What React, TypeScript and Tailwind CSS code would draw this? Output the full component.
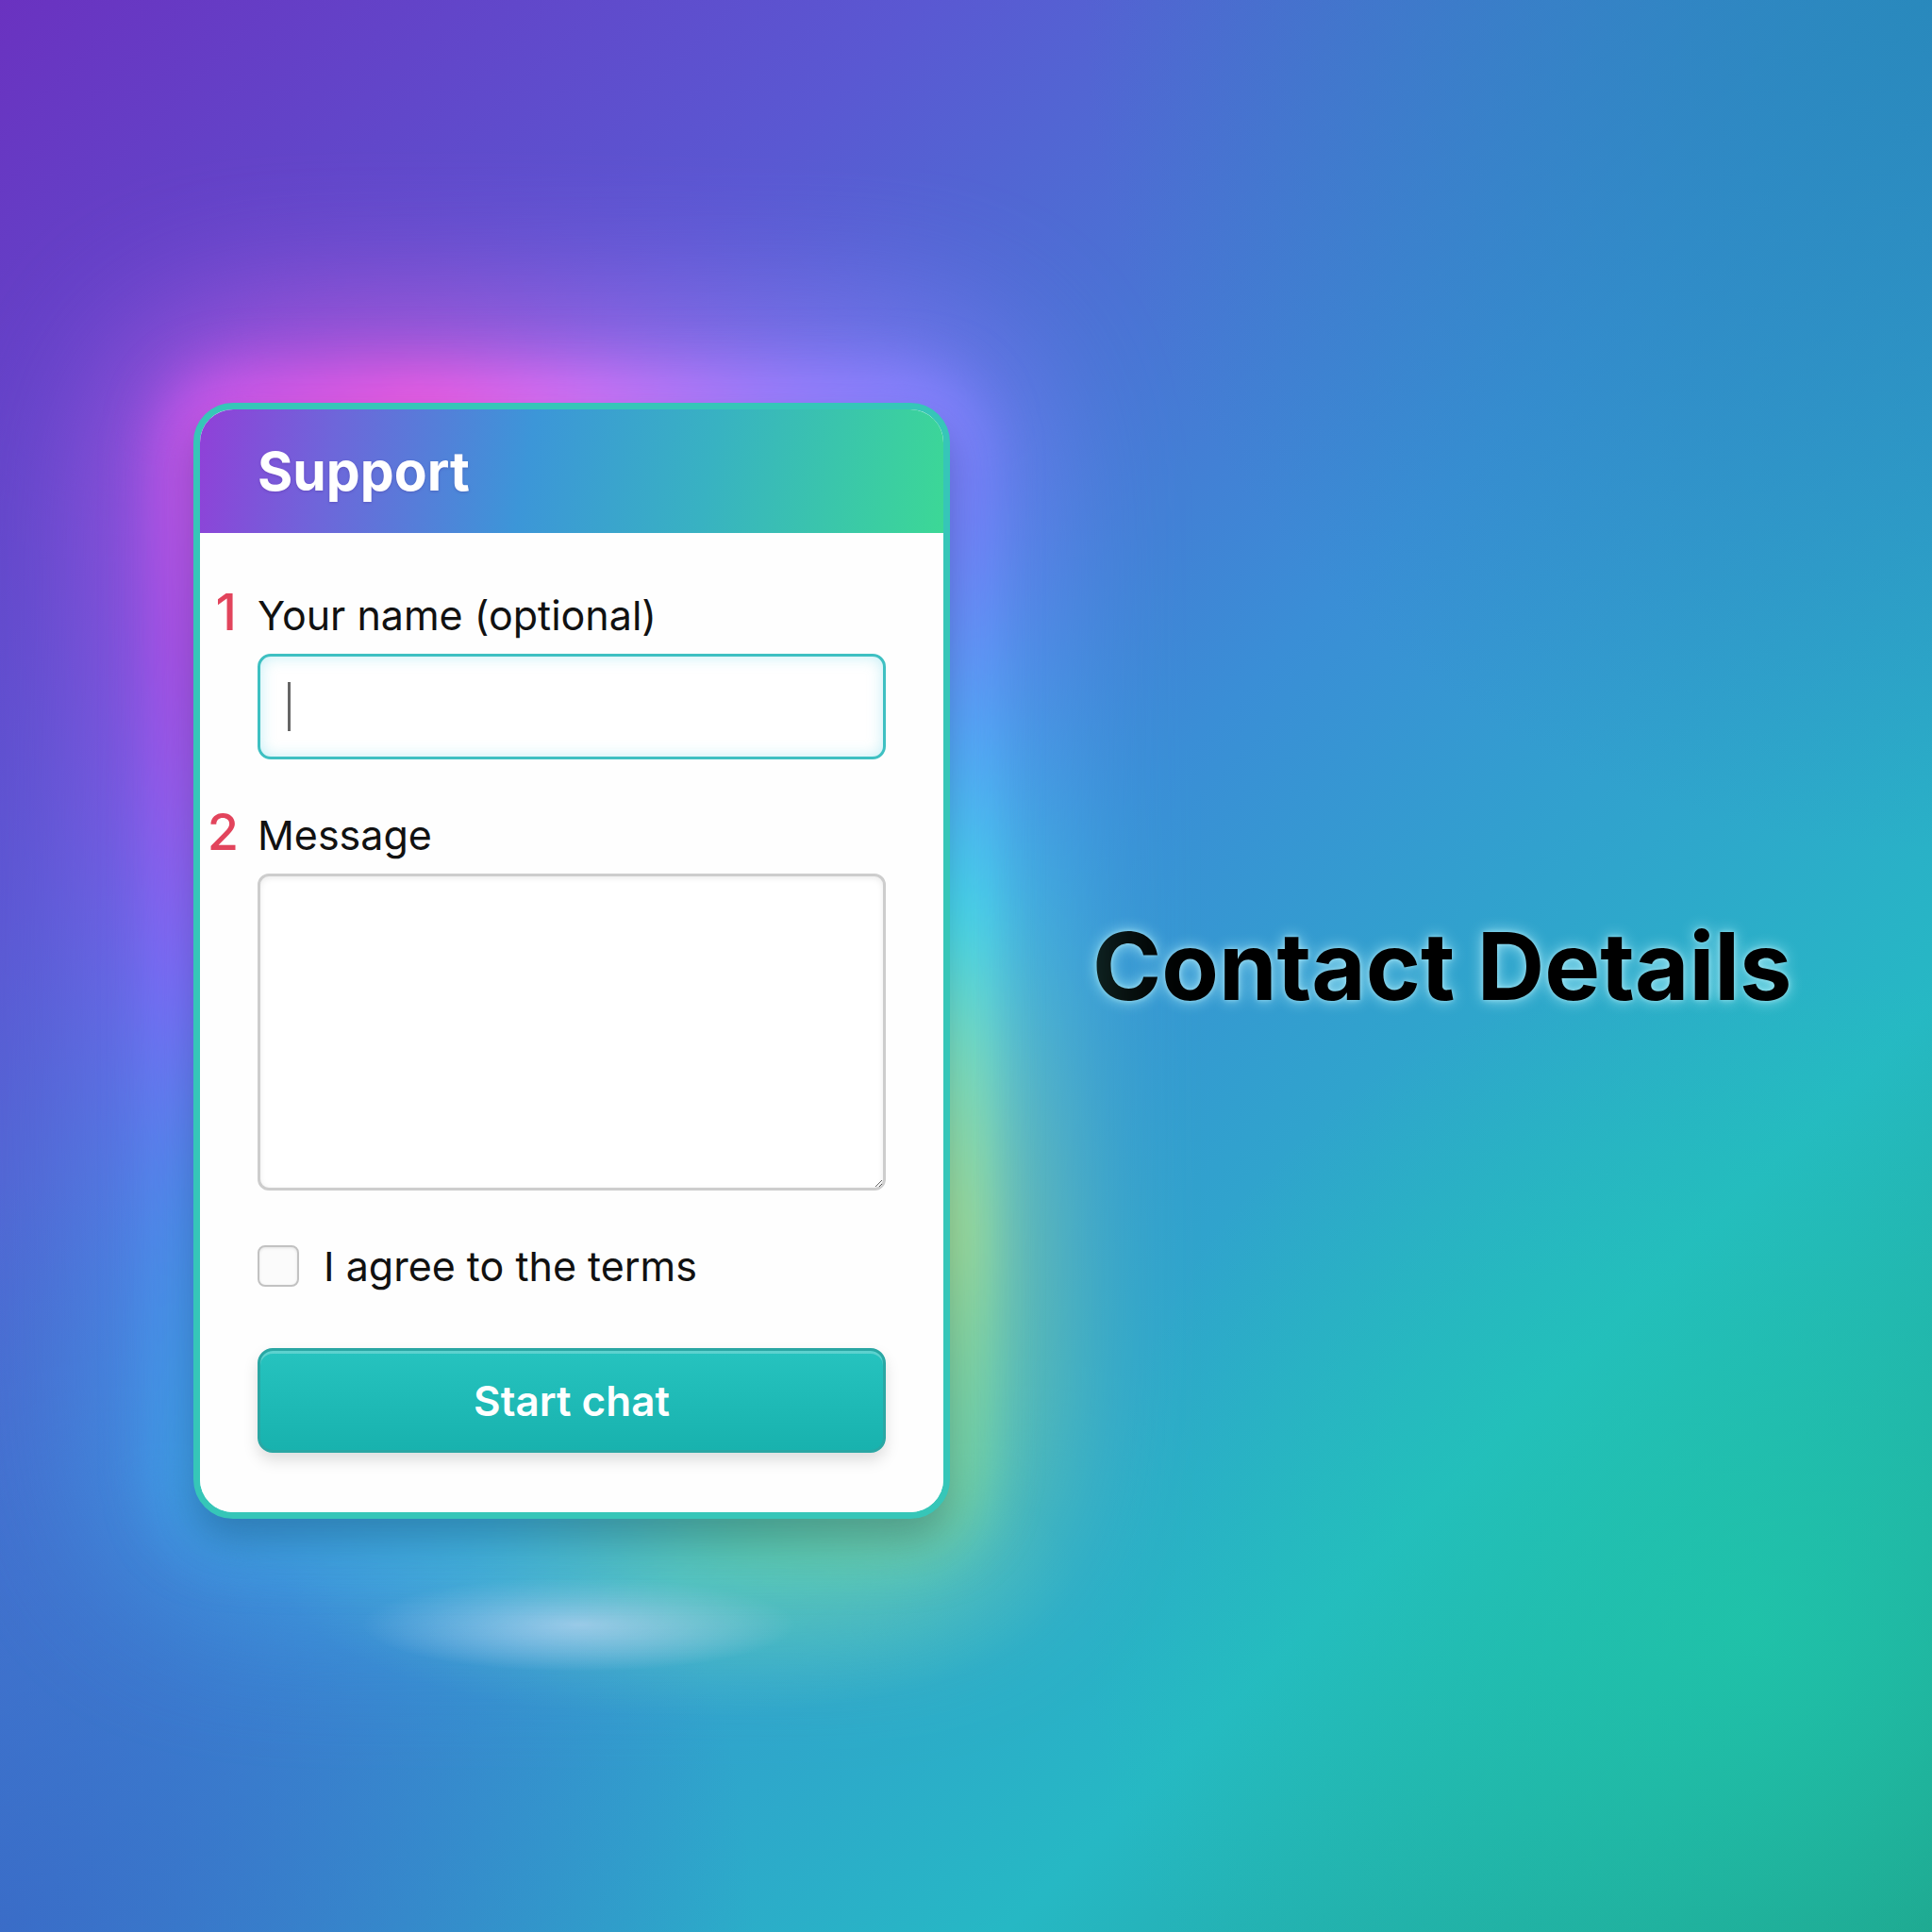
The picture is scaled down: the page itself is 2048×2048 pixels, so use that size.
export default function App() {
  return (
    <div className="relative w-[2048px] h-[2048px] overflow-hidden font-[Inter,'Noto_Sans',sans-serif] bg-[image:radial-gradient(ellipse_230px_50px_at_614px_1722px,rgba(214,216,252,0.8),rgba(214,216,252,0)),radial-gradient(ellipse_420px_150px_at_720px_1670px,rgba(110,215,200,0.5),rgba(110,215,200,0)),radial-gradient(circle_900px_at_2048px_0px,rgba(38,136,184,0.85),rgba(38,136,184,0)),radial-gradient(circle_800px_at_0px_2048px,rgba(58,100,196,0.8),rgba(58,100,196,0)),radial-gradient(circle_700px_at_1850px_1720px,rgba(30,204,170,0.7),rgba(30,204,170,0)),linear-gradient(135deg,#6a32c0_0%,#5a58d2_24%,#3a8ed6_50%,#26b8c4_76%,#1f9a86_100%)]">
      <div className="flex items-start pt-[427px] pl-[205px]">
        <div className="relative w-[802px] shrink-0">
          <div className="absolute -inset-[90px] rounded-[150px] blur-[80px] opacity-75 bg-[conic-gradient(from_0deg,#d070f4_0deg,#9a80ff_22deg,#7a84ff_41deg,#58b0ff_60deg,#48e4f0_83deg,#80e8c0_103deg,#a8e090_126deg,#80d8a0_140deg,#60d0a8_163deg,#40b8e0_188deg,#40a0e8_217deg,#5090f0_237deg,#8070ff_266deg,#b050e8_309deg,#c858e8_326deg,#ec5ce0_345deg,#d070f4_360deg)]" />
          <div className="absolute -inset-[30px] rounded-[72px] blur-[30px] bg-[conic-gradient(from_0deg,#d872f6_0deg,#9a80ff_22deg,#7a84ff_41deg,#58b0ff_60deg,#48e6f2_83deg,#84ecc2_103deg,#b0e894_126deg,#84dca2_140deg,#60d0a8_163deg,#40b8e0_188deg,#40a0e8_217deg,#5090f0_237deg,#8070ff_266deg,#b452ea_309deg,#cc58ea_326deg,#f05ce2_345deg,#d872f6_360deg)]" />
          <div className="relative overflow-hidden rounded-[42px] border-[7px] border-[#36c6b8] bg-white shadow-[0_22px_40px_rgba(10,40,80,0.32)]">
            <div className="flex h-[131px] items-center px-[61px] bg-[linear-gradient(100deg,#9040d8_0%,#6e66da_18%,#3c96d8_44%,#38b2c2_68%,#3cd896_100%)]">
              <span className="text-[57px] font-bold leading-none text-white [text-shadow:0_1px_3px_rgba(60,20,120,0.25)]">Support</span>
            </div>
            <div className="flex flex-col px-[61px] pt-[57px] pb-[63px] bg-[#fefefe]">
              <div className="flex items-baseline -ml-[61px]">
                <span className="w-[61px] pr-[22px] text-right text-[54px] font-medium leading-none text-[#e2445c]">1</span>
                <span className="text-[43px] leading-none text-[#111]">Your name (optional)</span>
              </div>
              <div className="mt-[17px] flex h-[112px] items-center rounded-[14px] border-[3px] border-[#3ec0c2] bg-white pl-[29px] shadow-[inset_0_0_16px_rgba(80,205,225,0.35)]">
                <div className="h-[52px] w-[3px] bg-[#666]" />
              </div>
              <div className="mt-[50px] flex items-baseline -ml-[61px]">
                <span className="w-[61px] pr-[20px] text-right text-[54px] font-medium leading-none text-[#e2445c]">2</span>
                <span className="text-[43px] leading-none text-[#111]">Message</span>
              </div>
              <textarea
                readOnly
                className="mt-[17px] block h-[336px] w-full rounded-[12px] border-[3px] border-[#cdcdcd] bg-white shadow-[inset_0_2px_6px_rgba(0,0,0,0.08)] outline-none"
              />
              <div className="mt-[58px] flex h-[44px] items-center gap-[26px]">
                <div className="h-[44px] w-[44px] rounded-[8px] border-[2.5px] border-[#c2c2c2] bg-[#fbfbfb] shadow-[inset_0_1px_3px_rgba(0,0,0,0.1)]" />
                <span className="text-[43px] leading-none text-[#111]">I agree to the terms</span>
              </div>
              <button className="mt-[65px] flex h-[111px] w-full items-center justify-center rounded-[16px] border-[3px] border-[#2aa7a4] bg-[linear-gradient(180deg,#26c3bf,#18b2ae)] text-[44px] font-semibold leading-none text-white shadow-[0_8px_16px_rgba(0,0,0,0.13),inset_0_3px_0_rgba(255,255,255,0.25)]">
                Start chat
              </button>
            </div>
          </div>
        </div>
        <h1 className="ml-[151px] mt-[548px] whitespace-nowrap text-[99px] font-bold leading-none text-black [text-shadow:0_0_16px_rgba(190,245,255,0.75),0_0_5px_rgba(190,245,255,0.6)]">
          Contact Details
        </h1>
      </div>
    </div>
  );
}
